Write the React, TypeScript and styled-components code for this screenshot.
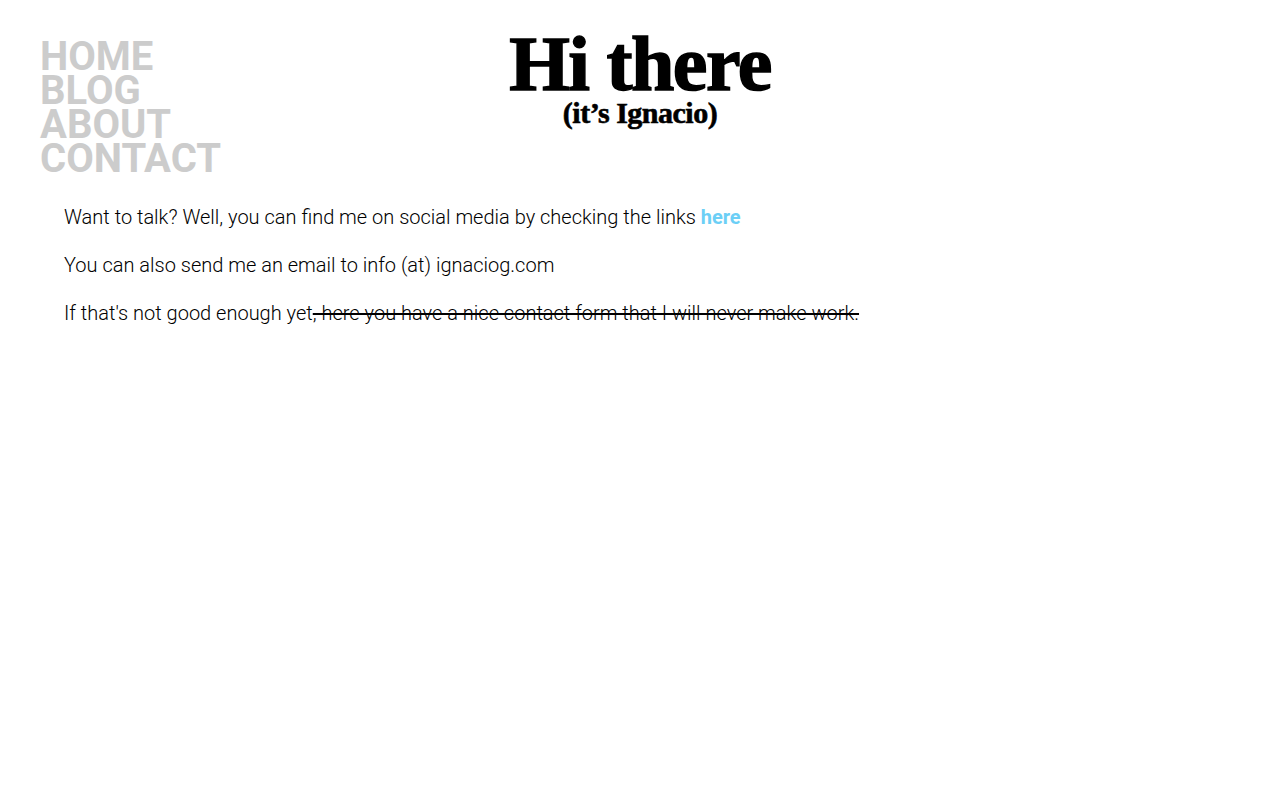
import styled, { createGlobalStyle } from "styled-components";

const GlobalStyle = createGlobalStyle`
  html, body {
    margin: 0;
    padding: 0;
    background: #fff;
  }
  body {
    font-family: Roboto, "Liberation Sans", sans-serif;
    color: #000;
  }
`;

const Page = styled.div`
  padding: 40px 40px 0;
  box-sizing: border-box;
`;

const Top = styled.header`
  display: grid;
  grid-template-columns: 1fr auto 1fr;
  align-items: start;
`;

const Nav = styled.nav`
  display: flex;
  flex-direction: column;
`;

const NavLink = styled.a`
  font-family: Roboto, "Liberation Sans", sans-serif;
  font-weight: 700;
  font-size: 40px;
  line-height: 34px;
  color: #cccccc;
  text-decoration: none;
  text-transform: uppercase;
`;

const Title = styled.div`
  text-align: center;
  font-family: "Liberation Serif", "DejaVu Serif", serif;
  font-weight: 700;
  color: #000;
`;

const Heading = styled.h1`
  margin: -8px 0 0;
  font-size: 78px;
  line-height: 64px;
  letter-spacing: -1.5px;
  -webkit-text-stroke: 1.5px #000;
`;

const Subheading = styled.h2`
  margin: 2px 0 0;
  font-size: 30px;
  line-height: 30px;
  letter-spacing: -0.5px;
  -webkit-text-stroke: 0.6px #000;
`;

const Content = styled.main`
  padding: 27px 24px 0;
`;

const Para = styled.p`
  margin: 0 0 20px;
  font-size: 20px;
  line-height: 28px;
  font-weight: 300;
`;

const Link = styled.a`
  color: #6ccff6;
  font-weight: 700;
  text-decoration: none;
`;

const Struck = styled.span`
  text-decoration: line-through;
`;

const links = ["Home", "Blog", "About", "Contact"];

export default function App() {
  return (
    <>
      <GlobalStyle />
      <Page>
        <Top>
          <Nav>
            {links.map((item) => (
              <NavLink key={item} href="#">
                {item}
              </NavLink>
            ))}
          </Nav>
          <Title>
            <Heading>Hi there</Heading>
            <Subheading>(it’s Ignacio)</Subheading>
          </Title>
          <div />
        </Top>
        <Content>
          <Para>
            Want to talk? Well, you can find me on social media by checking the links <Link href="#">here</Link>
          </Para>
          <Para>You can also send me an email to info (at) ignaciog.com</Para>
          <Para>
            If that's not good enough yet<Struck>, here you have a nice contact form that I will never make work.</Struck>
          </Para>
        </Content>
      </Page>
    </>
  );
}
